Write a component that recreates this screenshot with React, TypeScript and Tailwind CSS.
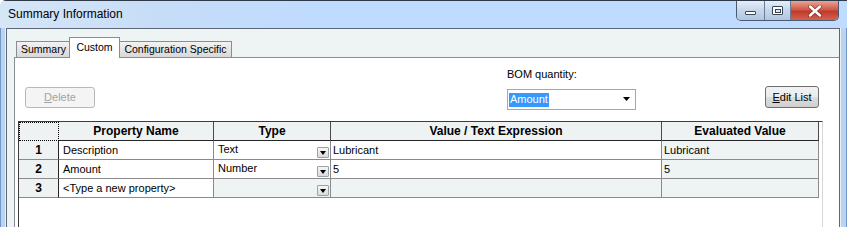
import React from 'react';

type Row = { n: number; name: string; type: string; value: string; ev: string; isNew?: boolean };

const rows: Row[] = [
  { n: 1, name: 'Description', type: 'Text', value: 'Lubricant', ev: 'Lubricant' },
  { n: 2, name: 'Amount', type: 'Number', value: '5', ev: '5' },
  { n: 3, name: '<Type a new property>', type: '', value: '', ev: '', isNew: true },
];

function DropButton() {
  return (
    <div className="mb-px mr-px flex h-[11px] w-[12px] items-center justify-center rounded-[1px] border border-[#9aa3ad] bg-[linear-gradient(#f7f7f7,#dadada)]">
      <svg width="10" height="9" viewBox="0 0 10 9">
        <polygon points="2,3 8,3 5,7" fill="#000" />
      </svg>
    </div>
  );
}

function CaptionButtons() {
  return (
    <div className="flex h-[20px] self-start overflow-hidden rounded-b-[5px] border border-t-0 border-[#4b5a6e]">
      <div className="flex w-[28px] items-end justify-center border-r border-[#6b7d93] bg-[linear-gradient(#e6eefa,#c6d7ec_50%,#b2c6e2)] pb-[5px]">
        <div className="h-[4px] w-[11px] rounded-[1px] border border-[#3a4656] bg-white" />
      </div>
      <div className="flex w-[26px] items-center justify-center border-r border-[#6b7d93] bg-[linear-gradient(#e6eefa,#c6d7ec_50%,#b2c6e2)]">
        <div className="flex h-[9px] w-[11px] items-center justify-center rounded-[1px] border border-[#3a4656] bg-white">
          <div className="h-[4px] w-[6px] border border-[#3a4656] bg-[#dfe7f1]" />
        </div>
      </div>
      <div className="flex w-[47px] items-center justify-center bg-[linear-gradient(#e9a495,#cf5a48_45%,#c23a2b_55%,#d2634c)]">
        <svg width="14" height="12" viewBox="0 0 14 12">
          <path d="M2 1.5 L12 10.5 M12 1.5 L2 10.5" stroke="#5a1d16" strokeWidth="4" strokeLinecap="round" opacity="0.55" />
          <path d="M2 1.5 L12 10.5 M12 1.5 L2 10.5" stroke="#fff" strokeWidth="2.4" strokeLinecap="round" />
        </svg>
      </div>
    </div>
  );
}

export default function App() {
  return (
    <div className="relative h-[227px] w-[847px] overflow-hidden rounded-tl-[6px] bg-[#bfdbff] font-['Liberation_Sans',Arial,sans-serif] text-black">
      {/* title bar */}
      <div className="flex h-[28px] border-t border-[#2f3a48] bg-[linear-gradient(90deg,#d6e6f6_0px,#c6ddf7_160px,#bfdbff_320px)] pr-[8px]">
        <div className="flex items-center pb-px pl-[8px] text-[12px] leading-none">Summary Information</div>
        <div className="ml-auto flex">
          <CaptionButtons />
        </div>
      </div>

      <div className="flex h-[199px]">
        <div className="w-[6px] border-r border-l border-r-[#eaf1fa] border-l-[#7396c8] bg-[#bcd3ee]" />

        {/* client area */}
        <div className="flex w-[834px] flex-col overflow-hidden border-x border-t border-[#5c6878] bg-[#eef3f4]">
          {/* tabs */}
          <div className="ml-[9px] mt-[8px] flex h-[20px] items-end text-[10.5px] leading-none">
            <div className="flex h-[16px] w-[53px] items-center justify-center border-l border-t border-[#898c95] bg-[linear-gradient(#f3f3f3,#e4e4e4_50%,#d9d9d9)] pl-px">
              Summary
            </div>
            <div className="relative z-10 -mb-px flex h-[21px] w-[51px] items-center justify-center border-x border-t border-[#898c95] bg-white pb-[2px]">
              Custom
            </div>
            <div className="flex h-[16px] w-[112px] items-center justify-center border-r border-t border-[#898c95] bg-[linear-gradient(#f3f3f3,#e4e4e4_50%,#d9d9d9)]">
              Configuration Specific
            </div>
          </div>

          {/* tab panel */}
          <div className="ml-[7px] flex-1 border-l border-t border-[#898c95] bg-white">
            <div className="flex h-[63px] items-start text-[11px] leading-none">
              <div className="ml-[10px] mt-[29px] flex h-[21px] w-[70px] items-center justify-center rounded-[3px] border border-[#b5b9bd] bg-[#f4f4f4] text-[#a3a3a3]">
                <span><span className="underline underline-offset-[1px]">D</span>elete</span>
              </div>

              <div className="ml-[412px] mt-[10px] flex flex-col">
                <div className="h-[13px] pt-px">BOM quantity:</div>
                <div className="mt-[8px] flex h-[21px] w-[129px] items-center border border-[#86aed8] bg-white pl-px pr-[4px]">
                  <span className="flex h-[14px] items-center bg-[#3399ff] px-px text-white">Amount</span>
                  <svg className="ml-auto" width="8" height="5" viewBox="0 0 8 5">
                    <polygon points="0,0 7,0 3.5,4" fill="#000" />
                  </svg>
                </div>
              </div>

              <div className="ml-[129px] mt-[28px] flex h-[22px] w-[54px] items-center justify-center rounded-[3px] border border-[#707070] bg-[linear-gradient(#f2f2f2,#ebebeb_50%,#dddddd_51%,#cfcfcf)]">
                <span><span className="underline underline-offset-[1px]">E</span>dit List</span>
              </div>
            </div>

            {/* property grid */}
            <div className="ml-[3px] h-[120px] w-[805px] border-l border-r border-t border-l-[#3c3c3c] border-r-[#d6d6d6] border-t-[#3c3c3c] bg-white">
              <div className="grid grid-cols-[40px_155px_117px_331px_157px] text-[11px] leading-none">
                <div className="h-[19px] bg-[#eef2f3]">
                  <div className="h-full w-full border border-dotted border-black" />
                </div>
                <div className="flex h-[19px] items-center justify-center border-b border-r border-b-[#262626] border-r-[#4a4a4a] bg-[#eef2f3] text-[12px] font-bold">
                  Property Name
                </div>
                <div className="flex h-[19px] items-center justify-center border-b border-r border-b-[#262626] border-r-[#4a4a4a] bg-[#eef2f3] text-[12px] font-bold">
                  Type
                </div>
                <div className="flex h-[19px] items-center justify-center border-b border-r border-b-[#262626] border-r-[#4a4a4a] bg-[#eef2f3] text-[12px] font-bold">
                  Value / Text Expression
                </div>
                <div className="flex h-[19px] items-center justify-center border-b border-r border-b-[#262626] border-r-[#4a4a4a] bg-[#eef2f3] text-[12px] font-bold">
                  Evaluated Value
                </div>

                {rows.map((r) => (
                  <React.Fragment key={r.n}>
                    <div className="flex h-[19px] items-center justify-center border-b border-r border-b-[#8a8a8a] border-r-[#262626] bg-[#eef2f3] text-[12px] font-bold">
                      {r.n}
                    </div>
                    <div className="flex h-[19px] items-center border-b border-r border-[#8a8a8a] bg-white pl-[4px]">
                      {r.name}
                    </div>
                    <div className={`flex h-[19px] items-end justify-between border-b border-r border-[#8a8a8a] pl-[4px] ${r.isNew ? 'bg-[#eef3f4]' : 'bg-white'}`}>
                      <span className="mb-[4px]">{r.type}</span>
                      <DropButton />
                    </div>
                    <div className={`flex h-[19px] items-center border-b border-r border-[#8a8a8a] pl-[2px] ${r.isNew ? 'bg-[#eef3f4]' : 'bg-white'}`}>
                      {r.value}
                    </div>
                    <div className="flex h-[19px] items-center border-b border-r border-[#8a8a8a] bg-[#eef3f4] pl-[2px]">
                      {r.ev}
                    </div>
                  </React.Fragment>
                ))}
              </div>
            </div>
          </div>
        </div>

        <div className="w-[7px] border-l border-r border-l-[#eaf1fa] border-r-[#7396c8] bg-[#bcd3ee]" />
      </div>
    </div>
  );
}
